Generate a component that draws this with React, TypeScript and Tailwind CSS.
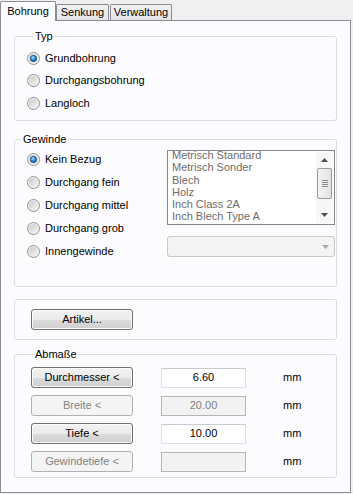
import React from "react";

const Radio = ({ checked }: { checked?: boolean }) => (
  <svg width="13" height="13" viewBox="0 0 13 13" className="shrink-0">
    <defs>
      <linearGradient id="rbfill" x1="0" y1="0" x2="1" y2="1">
        <stop offset="0" stopColor="#c9c9c9" />
        <stop offset="1" stopColor="#f6f6f6" />
      </linearGradient>
      <radialGradient id="rbdot" cx="0.4" cy="0.35" r="0.75">
        <stop offset="0" stopColor="#b9e6ff" />
        <stop offset="0.45" stopColor="#2e8ed8" />
        <stop offset="1" stopColor="#0d4c8a" />
      </radialGradient>
    </defs>
    <circle cx="6.5" cy="6.5" r="6" fill="#f3f3f3" stroke="#929292" strokeWidth="1" />
    <circle cx="6.5" cy="6.5" r="4.6" fill="url(#rbfill)" />
    {checked && <circle cx="6.5" cy="6.5" r="3.2" fill="url(#rbdot)" stroke="#24486e" strokeWidth="0.7" />}
  </svg>
);

const RadioRow = ({ label, checked, h }: { label: string; checked?: boolean; h: string }) => (
  <div className={`flex items-center gap-[5px] ${h}`}>
    <Radio checked={checked} />
    <span>{label}</span>
  </div>
);

const Btn = ({ label, disabled }: { label: string; disabled?: boolean }) =>
  disabled ? (
    <div className="flex h-[21px] w-[102px] items-center justify-center rounded-[3px] border border-[#adb2b5] bg-[#f4f4f4] text-[#838383]">
      {label}
    </div>
  ) : (
    <div className="flex h-[21px] w-[102px] items-center justify-center rounded-[3px] border border-[#707070] bg-[linear-gradient(to_bottom,#f2f2f2_0%,#ebebeb_50%,#dddddd_50%,#cfcfcf_100%)] shadow-[inset_0_0_0_1px_#fbfbfb]">
      {label}
    </div>
  );

const Field = ({ value, disabled }: { value: string; disabled?: boolean }) => (
  <div
    className={`flex h-[20px] w-[85px] items-center justify-center border ${
      disabled ? "border-[#b5b5b5] bg-[#f2f2f2] text-[#838383]" : "border-[#dcdfe6] border-t-[#c7cbd2] bg-white"
    }`}
  >
    {value}
  </div>
);

export default function App() {
  const listItems = [
    "Metrisch Standard",
    "Metrisch Sonder",
    "Blech",
    "Holz",
    "Inch Class 2A",
    "Inch Blech Type A",
  ];
  return (
    <div className="h-[494px] w-[353px] bg-[#f0f0f0] font-['Liberation_Sans',Arial,sans-serif] text-[11px] leading-[13px] text-black">
      {/* tab strip */}
      <div className="flex h-[20px] items-end">
        <div className="relative z-10 -mb-px flex h-[20px] w-[56px] items-center justify-center rounded-t-[2px] border border-b-0 border-[#898c95] bg-[#fcfcfe]">
          Bohrung
        </div>
        <div className="flex h-[16px] w-[53px] items-center justify-center rounded-t-[2px] border border-b-0 border-[#898c95] bg-[linear-gradient(to_bottom,#f2f2f2,#e5e5e5)]">
          Senkung
        </div>
        <div className="ml-[1px] flex h-[16px] w-[62px] items-center justify-center rounded-t-[2px] border border-b-0 border-[#898c95] bg-[linear-gradient(to_bottom,#f2f2f2,#e5e5e5)]">
          Verwaltung
        </div>
      </div>

      {/* panel */}
      <div className="h-[473px] w-[351px] border border-[#898c95] bg-[#fcfcfe] px-[13px]">
        {/* Typ */}
        <fieldset className="mt-[9px] h-[91px] rounded-[3px] border border-[#d5dfe5] pl-[12px]">
          <legend className="ml-[6px] px-[2px] leading-[13px]">Typ</legend>
          <div className="pt-[4px]">
            <RadioRow label="Grundbohrung" checked h="h-[22px]" />
            <RadioRow label="Durchgangsbohrung" h="h-[23px]" />
            <RadioRow label="Langloch" h="h-[22px]" />
          </div>
        </fieldset>

        {/* Gewinde */}
        <fieldset className="mt-[12px] h-[154px] rounded-[3px] border border-[#d5dfe5]">
          <legend className="ml-[6px] px-[2px] leading-[13px]">Gewinde</legend>
          <div className="flex pt-[2px]">
            <div className="w-[152px] pl-[12px]">
              <RadioRow label="Kein Bezug" checked h="h-[23px]" />
              <RadioRow label="Durchgang fein" h="h-[23px]" />
              <RadioRow label="Durchgang mittel" h="h-[23px]" />
              <RadioRow label="Durchgang grob" h="h-[23px]" />
              <RadioRow label="Innengewinde" h="h-[23px]" />
            </div>
            <div className="w-[168px] pt-[2px]">
              <div className="flex h-[75px] border border-[#828790] bg-white">
                <div className="flex-1 pl-[4px] text-[#6d6d6d]">
                  <div className="-mt-[1px]">
                    {listItems.map((t) => (
                      <div key={t} className="h-[12.3px] leading-[11px] whitespace-nowrap">
                        {t}
                      </div>
                    ))}
                  </div>
                </div>
                <div className="my-[1px] mr-[1px] flex w-[17px] flex-col items-center bg-[#f7f7f7]">
                  <div className="flex h-[16px] items-center justify-center">
                    <svg width="7" height="4" viewBox="0 0 7 4">
                      <path d="M0 4 L3.5 0 L7 4 Z" fill="#4d4d4d" />
                    </svg>
                  </div>
                  <div className="flex h-[31px] w-[15px] flex-col items-center justify-center gap-[1px] rounded-[2px] border border-[#9a9a9a] bg-[linear-gradient(to_right,#f3f3f3,#e2e2e2)]">
                    <div className="h-px w-[6px] bg-[#8a8a8a]" />
                    <div className="h-px w-[6px] bg-[#8a8a8a]" />
                    <div className="h-px w-[6px] bg-[#8a8a8a]" />
                    <div className="h-px w-[6px] bg-[#8a8a8a]" />
                  </div>
                  <div className="flex-1" />
                  <div className="flex h-[17px] items-center justify-center">
                    <svg width="7" height="4" viewBox="0 0 7 4">
                      <path d="M0 0 L7 0 L3.5 4 Z" fill="#4d4d4d" />
                    </svg>
                  </div>
                </div>
              </div>
              <div className="mt-[11px] flex h-[21px] items-center justify-end rounded-[3px] border border-[#c9c9c9] bg-[#f4f4f4] pr-[5px]">
                <svg width="7" height="4" viewBox="0 0 7 4">
                  <path d="M0 0 L7 0 L3.5 4 Z" fill="#a9a9a9" />
                </svg>
              </div>
            </div>
          </div>
        </fieldset>

        {/* Artikel */}
        <div className="mt-[12px] h-[41px] rounded-[3px] border border-[#d5dfe5] pl-[16px] pt-[9px]">
          <Btn label="Artikel..." />
        </div>

        {/* Abmaße */}
        <fieldset className="mt-[8px] h-[130px] rounded-[3px] border border-[#d5dfe5] pl-[16px]">
          <legend className="ml-[2px] px-[2px] leading-[13px]">Abmaße</legend>
          <div className="flex flex-col gap-[7px] pt-[6px]">
            {[
              { l: "Durchmesser <", v: "6.60", d: false },
              { l: "Breite <", v: "20.00", d: true },
              { l: "Tiefe <", v: "10.00", d: false },
              { l: "Gewindetiefe <", v: "", d: true },
            ].map((r) => (
              <div key={r.l} className="flex h-[21px] items-center">
                <Btn label={r.l} disabled={r.d} />
                <div className="ml-[28px]">
                  <Field value={r.v} disabled={r.d} />
                </div>
                <span className="ml-[37px]">mm</span>
              </div>
            ))}
          </div>
        </fieldset>
      </div>
    </div>
  );
}
